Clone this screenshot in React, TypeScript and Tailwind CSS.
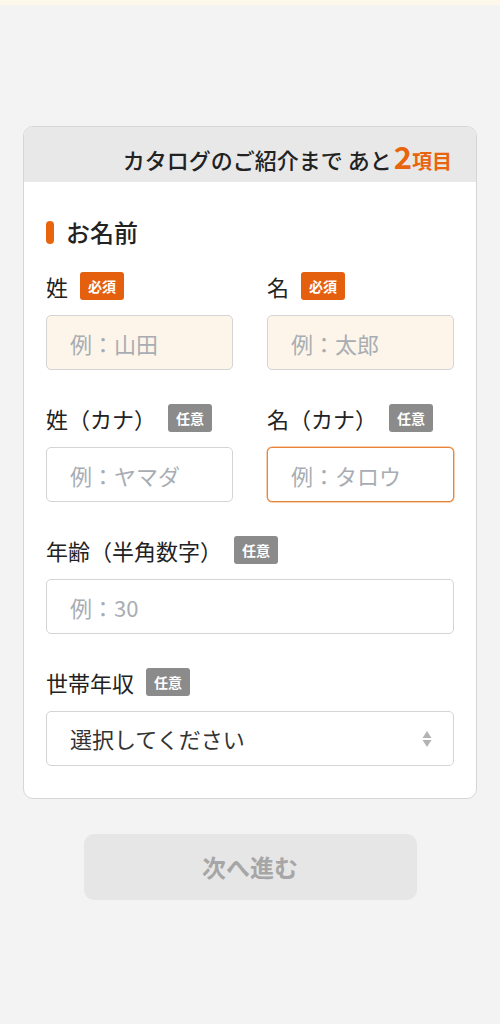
import { ChangeEvent, useState } from "react";

type FieldProps = {
    label: string;
    required?: boolean;
    placeholder: string;
    filled?: boolean;
    focused?: boolean;
};

function Badge({ required }: { required?: boolean }) {
    return (
        <span
            className={`inline-flex items-center justify-center w-[44px] h-[28px] rounded-[3px] text-[14px] font-bold text-white leading-none ${
                required ? "bg-[#e4600f]" : "bg-[#8b8b8b]"
            }`}
        >
            {required ? "必須" : "任意"}
        </span>
    );
}

function FieldLabel({ label, required }: { label: string; required?: boolean }) {
    return (
        <div className="flex items-center gap-[12px] h-[28px]">
            <span className="text-[22px] leading-none text-[#222]">{label}</span>
            <Badge required={required} />
        </div>
    );
}

function Field({ label, required, placeholder, filled, focused }: FieldProps) {
    const [value, setValue] = useState("");

    return (
        <div className="flex flex-col gap-[15px] min-w-0">
            <FieldLabel label={label} required={required} />
            <input
                value={value}
                onChange={(e: ChangeEvent<HTMLInputElement>) => setValue(e.target.value)}
                placeholder={placeholder}
                className={`w-full h-[55px] rounded-[5px] border px-[23px] text-[22px] text-[#222] outline-none placeholder:text-[#a8adb4] ${
                    filled ? "bg-[#fdf5e9]" : "bg-white"
                } ${focused ? "border-[#e9843a] shadow-[0_0_0_0.5px_#f0a060]" : "border-[#d4d4d4]"}`}
            />
        </div>
    );
}

export default function App() {
    return (
        <div className="min-h-[1024px] bg-[#f3f3f3] font-['Noto_Sans_CJK_JP','Noto_Sans',sans-serif]">
            <div className="h-[5px] bg-[#fdf8ea]"></div>

            <div className="mx-[23px] mt-[121px] rounded-[10px] border border-[#d6d6d6] bg-white overflow-hidden">
                <div className="h-[55px] bg-[#e8e8e8] flex items-center justify-end pr-[24px] pt-[6px]">
                    <p className="flex items-baseline text-[#222]">
                        <span className="text-[22px] font-medium">カタログのご紹介まで あと</span>
                        <span className="text-[31px] font-bold text-[#e8650e] leading-none ml-[2px]">2</span>
                        <span className="text-[20px] font-bold text-[#e8650e]">項目</span>
                    </p>
                </div>

                <div className="px-[22px] pt-[34px] pb-[32px]">
                    <div className="flex items-center gap-[12px] h-[32px]">
                        <span className="w-[8px] h-[23px] rounded-full bg-[#e8650e]"></span>
                        <h2 className="text-[24px] font-medium text-[#222] leading-none">お名前</h2>
                    </div>

                    <div className="mt-[24px] flex flex-col gap-[34px]">
                        <div className="grid grid-cols-2 gap-x-[34px]">
                            <Field label="姓" required placeholder="例：山田" filled />
                            <Field label="名" required placeholder="例：太郎" filled />
                        </div>
                        <div className="grid grid-cols-2 gap-x-[34px]">
                            <Field label="姓（カナ）" placeholder="例：ヤマダ" />
                            <Field label="名（カナ）" placeholder="例：タロウ" focused />
                        </div>
                        <Field label="年齢（半角数字）" placeholder="例：30" />

                        <div className="flex flex-col gap-[15px]">
                            <FieldLabel label="世帯年収" />
                            <div className="relative">
                                <select className="w-full h-[55px] appearance-none rounded-[5px] border border-[#d4d4d4] bg-white px-[23px] text-[22px] text-[#333] outline-none">
                                    <option>選択してください</option>
                                    <option>300万円未満</option>
                                    <option>300〜500万円</option>
                                    <option>500〜700万円</option>
                                    <option>700万円以上</option>
                                </select>
                                <svg
                                    className="absolute right-[22px] top-1/2 -translate-y-1/2 pointer-events-none"
                                    width="10"
                                    height="18"
                                    viewBox="0 0 10 18"
                                >
                                    <path d="M5 1 L9.5 8 H0.5 Z" fill="#b3b3b3" />
                                    <path d="M5 17 L9.5 10 H0.5 Z" fill="#b3b3b3" />
                                </svg>
                            </div>
                        </div>
                    </div>
                </div>
            </div>

            <div className="mt-[35px] flex justify-center">
                <button
                    disabled
                    className="w-[333px] h-[66px] rounded-[10px] bg-[#e6e6e6] text-[24px] font-bold text-[#a6a6a6]"
                >
                    次へ進む
                </button>
            </div>
        </div>
    );
}
